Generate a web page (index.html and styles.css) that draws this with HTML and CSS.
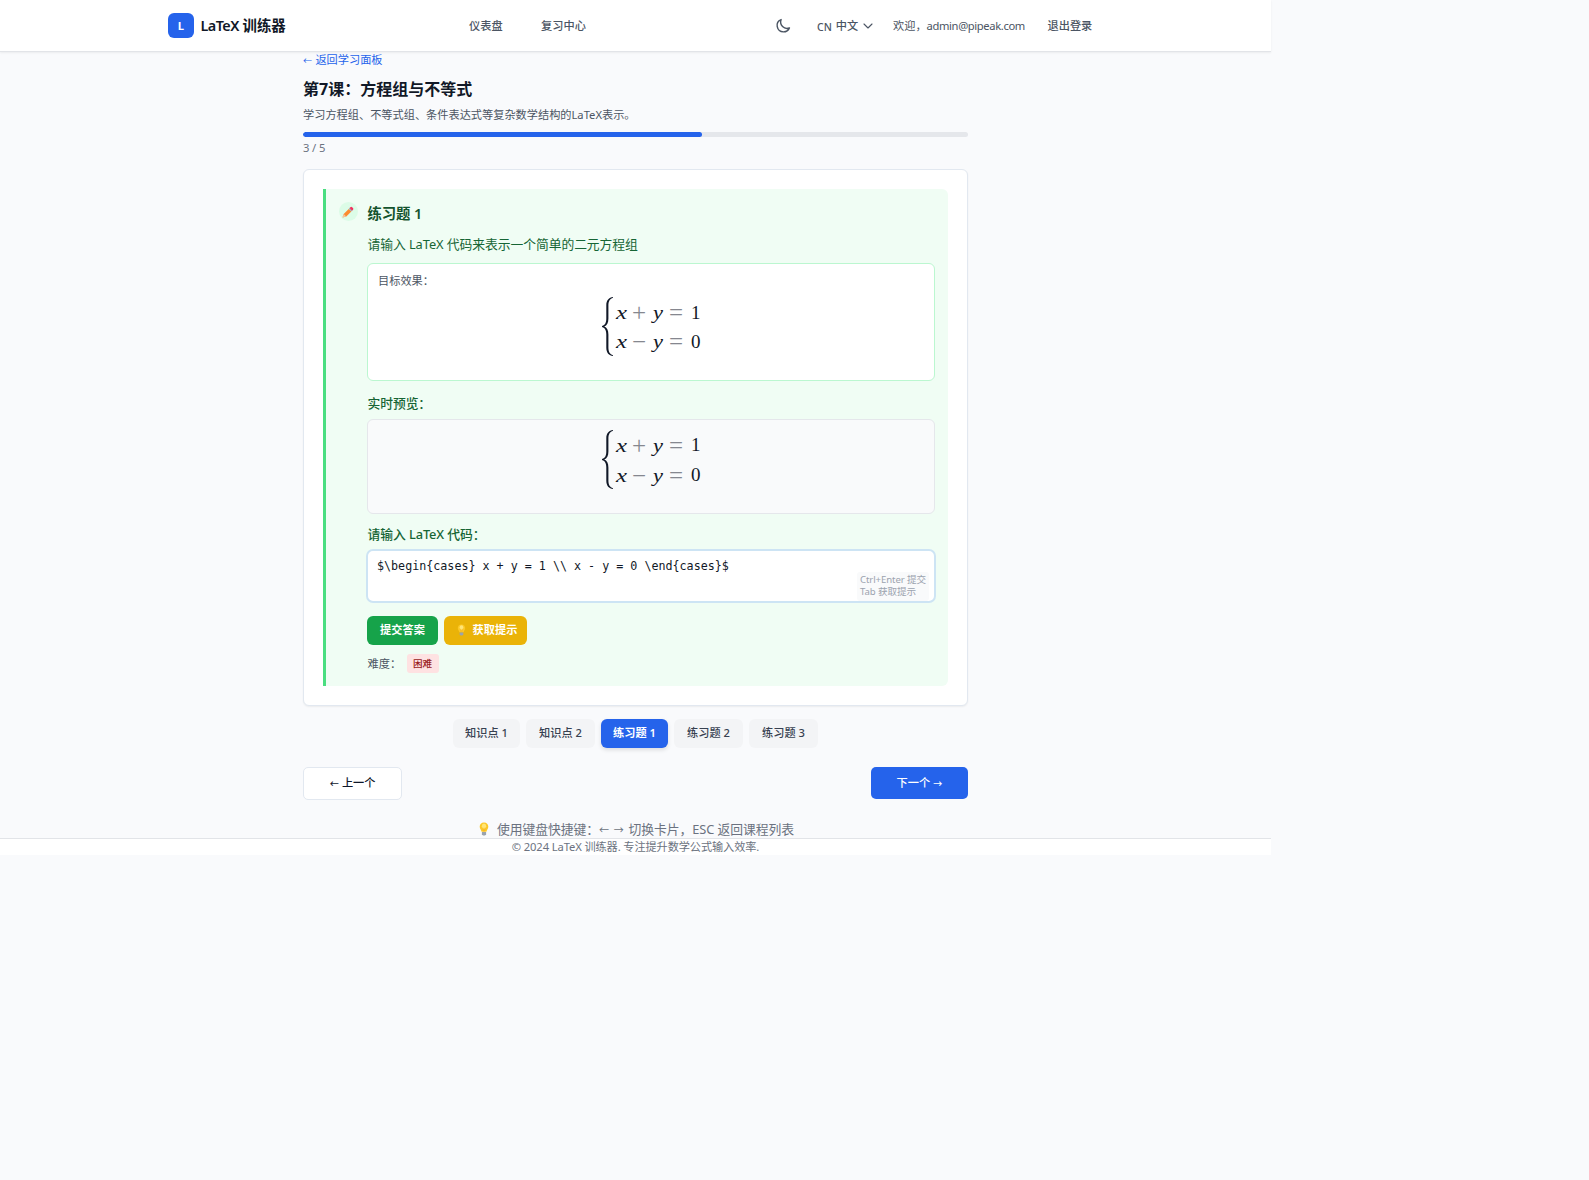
FILE: index.html
```html
<!DOCTYPE html>
<html lang="zh-CN">
<head>
<meta charset="utf-8">
<title>LaTeX 训练器</title>
<link rel="stylesheet" href="styles.css">
</head>
<body>
<svg class="defs" width="0" height="0" aria-hidden="true">
  <symbol id="bulb" viewBox="0 0 10 14">
    <path d="M5 .5C2.4.5.7 2.400.7 4.700c0 2 1.500 3 1.900 5h4.800c.4-2 1.900-3 1.900-5C9.300 2.400 7.600.5 5 .5z" fill="#fcc827"/>
    <ellipse cx="5" cy="4.200" rx="2.200" ry="2.600" fill="#ffe577"/>
    <path d="M3.800 5.500 4.500 9.500M6.200 5.500 5.500 9.500" stroke="#f4a91f" stroke-width=".5"/>
    <path d="M2.900 9.900h4.200v2.300L6 13.500H4l-1.100-1.300z" fill="#9aa3ad"/>
  </symbol>
</svg>
<div class="app">
  <header class="topbar">
    <a class="brand"><span class="logo">L</span><span class="brand-name"><span class="latin">LaTeX</span> 训练器</span></a>
    <nav class="nav"><a>仪表盘</a><a>复习中心</a></nav>
    <div class="account">
      <svg class="moon" width="17" height="17" viewBox="0 0 24 24" fill="none" stroke="#4b5563" stroke-width="2" stroke-linecap="round" stroke-linejoin="round"><path d="M20.354 15.354A9 9 0 018.646 3.646 9.003 9.003 0 0012 21a9.003 9.003 0 008.354-5.646z"/></svg>
      <span class="lang"><span class="cn">CN</span>中文<svg width="10" height="6" viewBox="0 0 10 6" fill="none" stroke="#4b5563" stroke-width="1.100" stroke-linecap="round" stroke-linejoin="round"><path d="M1 1l4 4 4-4"/></svg></span>
      <span class="welcome">欢迎，<span class="mail">admin@pipeak.com</span></span>
      <a class="logout">退出登录</a>
    </div>
  </header>
  <main class="lesson">
    <a class="back"><span class="arrow">←</span> 返回学习面板</a>
    <h1>第7课：方程组与不等式</h1>
    <p class="desc">学习方程组、不等式组、条件表达式等复杂数学结构的LaTeX表示。</p>
    <div class="track"><div class="fill" style="width:60%"></div></div>
    <div class="count">3 / 5</div>
    <section class="card">
      <div class="exercise">
        <span class="badge-icon"><svg width="12" height="12" viewBox="0 0 12 12"><path d="M.5 11.500l1.200-3.600 5-5 2.600 2.600-5 5z" fill="#fb8c2e"/><path d="M.5 11.500l1.200-3.600 2.600 2.600z" fill="#f3c59b"/><path d="M6.700 2.900l.9-.9 2.600 2.600-.9.9z" fill="#a9a6b0"/><path d="M7.500 2.100l.9-.9q.9-.7 1.700 0l.9.9q.7.900 0 1.700l-.9.9z" fill="#f0325f"/></svg></span>
        <div class="content">
          <h2>练习题 1</h2>
          <p class="question">请输入 LaTeX 代码来表示一个简单的二元方程组</p>
          <div class="target">
            <div class="target-label">目标效果：</div>
            <svg class="math" width="100" height="62" viewBox="0 0 100 62">
              <path class="brace" d="M12 1C8 1.500 5.300 4 5.300 9.500v13c0 4-1 6.500-4.300 7.500v1c3.300 1 4.300 3.500 4.300 7.500v13c0 5.500 2.700 8 6.700 8.500v-.7C9 58.200 7.400 56 7.400 51.500v-13c0-4.500-1.400-6.800-4.200-8 2.800-1.200 4.200-3.500 4.200-8v-13C7.400 5 9 2.800 12 1.700z"/>
              <text class="var" x="15" y="23" textLength="11" lengthAdjust="spacingAndGlyphs">x</text><text class="op" x="31" y="24.500">+</text><text class="var" x="52" y="23" textLength="10" lengthAdjust="spacingAndGlyphs">y</text><text class="op" x="68" y="24.500">=</text><text class="num" x="90" y="22.500">1</text>
              <text class="var" x="15" y="52" textLength="11" lengthAdjust="spacingAndGlyphs">x</text><text class="op" x="31" y="53.500">−</text><text class="var" x="52" y="52" textLength="10" lengthAdjust="spacingAndGlyphs">y</text><text class="op" x="68" y="53.500">=</text><text class="num" x="90" y="51.500">0</text>
            </svg>
          </div>
          <div class="label">实时预览：</div>
          <div class="preview">
            <svg class="math" width="100" height="62" viewBox="0 0 100 62">
              <path class="brace" d="M12 1C8 1.500 5.300 4 5.300 9.500v13c0 4-1 6.500-4.300 7.500v1c3.300 1 4.300 3.500 4.300 7.500v13c0 5.500 2.700 8 6.700 8.500v-.7C9 58.200 7.400 56 7.400 51.500v-13c0-4.500-1.400-6.800-4.200-8 2.800-1.200 4.200-3.500 4.200-8v-13C7.400 5 9 2.800 12 1.700z"/>
              <text class="var" x="15" y="22.500" textLength="11" lengthAdjust="spacingAndGlyphs">x</text><text class="op" x="31" y="24.500">+</text><text class="var" x="52" y="22.500" textLength="10" lengthAdjust="spacingAndGlyphs">y</text><text class="op" x="68" y="24.500">=</text><text class="num" x="90" y="22">1</text>
              <text class="var" x="15" y="52.500" textLength="11" lengthAdjust="spacingAndGlyphs">x</text><text class="op" x="31" y="54.500">−</text><text class="var" x="52" y="52.500" textLength="10" lengthAdjust="spacingAndGlyphs">y</text><text class="op" x="68" y="54.500">=</text><text class="num" x="90" y="52">0</text>
            </svg>
          </div>
          <div class="label input-label">请输入 LaTeX 代码：</div>
          <div class="editor"><code>$\begin{cases} x + y = 1 \\ x - y = 0 \end{cases}$</code><div class="hint">Ctrl+Enter 提交<br>Tab 获取提示</div></div>
          <div class="actions">
            <button class="btn submit">提交答案</button>
            <button class="btn tip"><svg width="9" height="12"><use href="#bulb"/></svg>获取提示</button>
          </div>
          <div class="difficulty">难度：<span class="level">困难</span></div>
        </div>
      </div>
    </section>
    <div class="tabs"><a class="tab">知识点 1</a><a class="tab wide">知识点 2</a><a class="tab active">练习题 1</a><a class="tab wide">练习题 2</a><a class="tab wide">练习题 3</a></div>
    <div class="pager"><button class="prev"><span class="arrow">←</span> 上一个</button><button class="next">下一个 <span class="arrow">→</span></button></div>
    <p class="keys"><svg width="10" height="14"><use href="#bulb"/></svg><span>使用键盘快捷键：<span class="arrow">←</span> <span class="arrow">→</span> 切换卡片，ESC 返回课程列表</span></p>
  </main>
  <footer>© 2024 LaTeX 训练器. 专注提升数学公式输入效率.</footer>
</div>
</body>
</html>
```
FILE: styles.css
```css
* { box-sizing: border-box; margin: 0; padding: 0; }
body { background: #f9fafc; font-family: "Noto Sans", "Noto Sans CJK SC", sans-serif; font-size: 11.2px; line-height: 16px; color: #111827; }
.defs { position: absolute; }
.app { width: 1271px; }
button { font: inherit; border: 0; }
.arrow { display: inline-block; width: 9.5px; font-size: 9px; line-height: 1; vertical-align: 0; }

.topbar { height: 52px; background: #fff; border-bottom: 1px solid #e2e4e8; box-shadow: 0 1px 2px rgba(0,0,0,.06); padding-left: 168px; display: flex; align-items: center; font-weight: 500; color: #4b5563; white-space: nowrap; }
.brand { width: 301px; display: flex; align-items: center; gap: 6.500px; color: #111827; }
.logo { width: 26px; height: 25px; border-radius: 6px; background: #2563eb; color: #fff; font-weight: 700; display: grid; place-items: center; }
.brand-name { font-size: 14.4px; font-weight: 600; }
.latin { letter-spacing: -.55px; }
.nav { width: 307px; display: flex; gap: 38.500px; }
.account { display: flex; align-items: center; }
.moon { margin: 0 25px 0 -1px; }
.lang { display: flex; align-items: center; width: 76px; }
.cn { font-size: 10.5px; margin: 2px 4px 0 0; }
.lang svg { margin-left: 4.500px; }
.welcome { width: 154.500px; font-weight: 400; }
.mail { letter-spacing: -.37px; }

.lesson { width: 665px; margin-left: 303px; }
.back { display: block; color: #2563eb; height: 16px; }
h1 { font-size: 16px; line-height: 24px; font-weight: 700; margin-top: 9px; }
.desc { color: #4b5563; margin-top: 6px; }
.track { height: 5px; margin-top: 9px; border-radius: 3px; background: #e5e7eb; overflow: hidden; }
.fill { height: 5px; border-radius: 3px; background: #2563eb; }
.count { color: #6b7280; margin-top: 3px; letter-spacing: -.1px; }
.card { margin-top: 13px; height: 537px; background: #fff; border: 1px solid #e2e8f0; border-radius: 6px; padding: 19px; box-shadow: 0 1px 2px rgba(0,0,0,.06); }
.exercise { height: 497px; background: #f0fdf4; border-left: 3px solid #4ade80; border-radius: 0 6px 6px 0; padding: 13px 13px 0 13px; display: flex; gap: 9px; }
.badge-icon { flex: none; width: 19px; height: 19px; border-radius: 50%; background: #dcfce7; display: grid; place-items: center; }
.badge-icon svg { margin-left: -1px; }
.content { flex: 1; }
h2 { font-size: 14.4px; line-height: 22px; font-weight: 600; color: #14532d; padding: 1px 0 0 .5px; letter-spacing: -.1px; }
.question { font-size: 12.8px; line-height: 20px; margin-top: 9px; padding-left: .5px; color: #166534; letter-spacing: -.06px; }
.target { height: 118px; margin-top: 9px; background: #fff; border: 1px solid #bbf7d0; border-radius: 6px; padding: 9px 10px; }
.target-label { color: #4b5563; }
.math { display: block; margin: 7px auto 0; }
.brace { fill: #111827; }
.var { font: italic 19px "Liberation Serif", serif; fill: #111827; }
.num { font: 19px "Liberation Serif", serif; fill: #111827; }
.op { font: 25px "Liberation Serif", serif; fill: #85878f; }
.label { font-size: 12.8px; line-height: 20px; font-weight: 500; color: #166534; margin-top: 12px; padding-left: .5px; letter-spacing: -.08px; }
.preview { height: 95px; margin-top: 6px; background: #f9fafb; border: 1px solid #e5e7eb; border-radius: 6px; padding-top: 2px; }
.input-label { margin-top: 10px; }
.editor { height: 54px; margin: 5px -1px 0; background: #fff; border: 2px solid #cde4f4; border-radius: 7px; padding: 6px 9px; position: relative; }
code { display: block; font: 11.700px/18px "DejaVu Sans Mono", monospace; white-space: pre; color: #111827; }
.hint { position: absolute; right: 5px; bottom: 0; width: 72px; height: 29px; padding: 2px 3px; background: #f9fafb; border-radius: 3px; color: #9ca3af; font-size: 9.6px; line-height: 12px; letter-spacing: -.1px; white-space: nowrap; }
.actions { display: flex; gap: 6px; margin-top: 13px; }
.btn { height: 29px; border-radius: 6px; color: #fff; font-weight: 600; display: flex; align-items: center; justify-content: center; padding-bottom: 1px; }
.submit { width: 71px; background: #16a34a; }
.tip { width: 83px; background: #eab308; gap: 7px; padding-left: 3px; }
.difficulty { display: flex; align-items: center; margin-top: 9px; height: 19px; padding-left: .5px; color: #4b5563; }
.level { width: 32px; height: 19px; margin-left: 5.500px; border-radius: 3px; background: #fee2e2; color: #991b1b; font-size: 9.6px; font-weight: 500; line-height: 19px; text-align: center; }

.tabs { display: flex; justify-content: center; gap: 6px; margin-top: 13px; }
.tab { width: 67px; height: 29px; border-radius: 6px; background: #f3f4f6; color: #374151; font-weight: 500; line-height: 28px; text-align: center; }
.wide { width: 69px; }
.active { background: #2563eb; color: #fff; font-weight: 600; box-shadow: 0 2px 4px rgba(0,0,0,.12); }
.pager { display: flex; justify-content: space-between; margin-top: 19px; height: 33px; font-weight: 500; }
.prev { width: 99px; height: 33px; background: #fff; border: 1px solid #e2e8f0; border-radius: 5px; color: #0f172a; font-weight: 500; padding-bottom: 1px; }
.next { width: 97px; height: 32px; background: #2563eb; border-radius: 5px; color: #fff; font-weight: 500; }
.keys { display: flex; align-items: center; justify-content: center; gap: 8px; height: 20px; margin-top: 19px; margin-bottom: -1px; padding-left: 2px; font-size: 12.8px; line-height: 20px; letter-spacing: -.05px; color: #6b7280; }
.keys .arrow { width: 11.500px; font-size: 10px; }
footer { height: 17px; border-top: 1px solid #e2e4e8; background: #fff; color: #6b7280; text-align: center; line-height: 16px; letter-spacing: -.11px; }
```
